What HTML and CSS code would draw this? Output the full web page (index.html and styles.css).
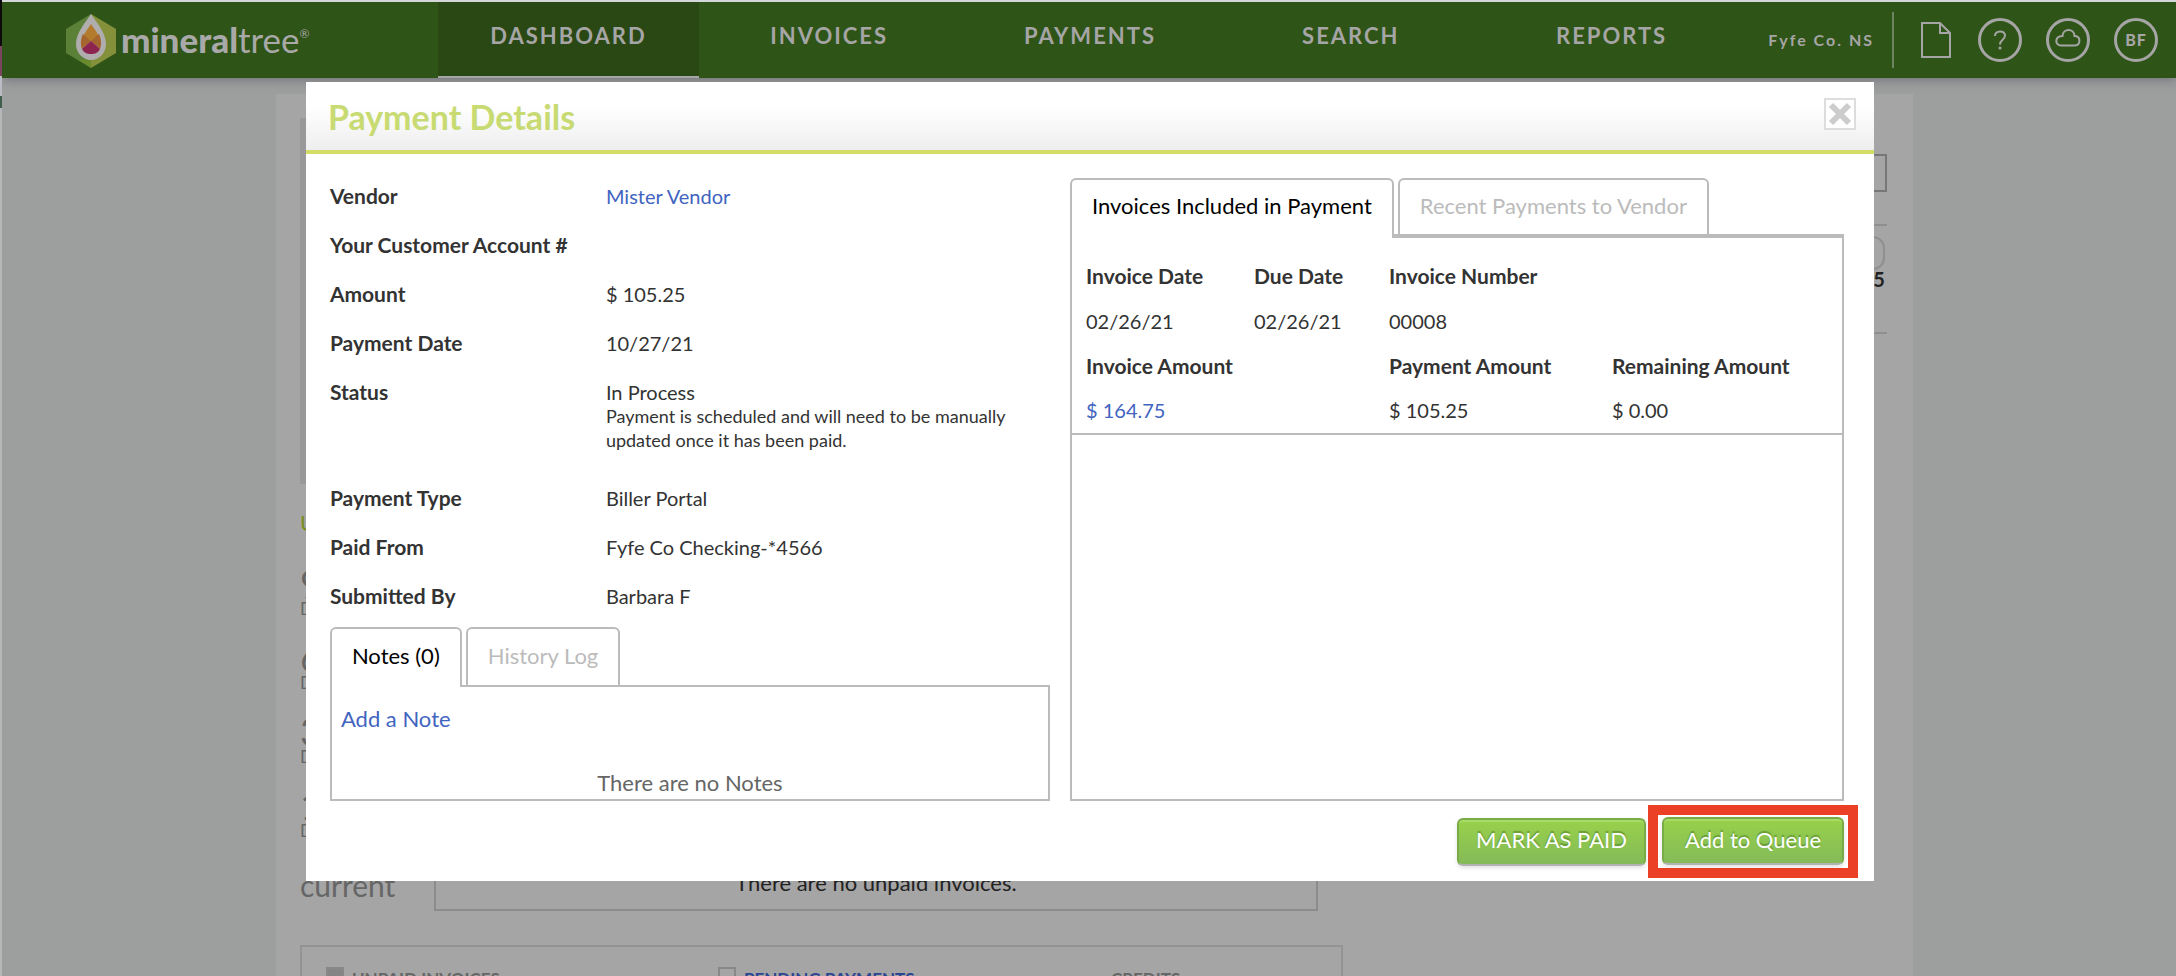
FILE: index.html
```
<!DOCTYPE html>
<html lang="en">
<head>
<meta charset="utf-8">
<title>Payment Details</title>
<link rel="stylesheet" href="styles.css">
</head>
<body>
<div class="edge"></div>
<div class="app">
  <header class="topbar">
    <a class="logo" href="#">
      <svg class="logo-mark" viewBox="0 0 50 54" aria-hidden="true">
        <path fill="#5b8139" d="M25 0 0 15v24l25 15z"/>
        <path fill="#84913a" d="M25 0l25 15v24L25 54z"/>
        <path fill="#6a8a2c" d="M25 45v9l-12-8z"/>
        <path fill="#b0adae" d="M25 0c6 9 15 19 15 30a15 16 0 0 1-30 0C10 19 19 9 25 0z"/>
        <path fill="#b37b2d" d="M25 10c4 6 10 13 10 20l-10-3-10 3c0-7 6-14 10-20z"/>
        <path fill="#a5652f" d="M17 20l8 7-9 8c-2-5-1-11 1-15zM33 20l-8 7 9 8c2-5 1-11-1-15z"/>
        <path fill="#8d2450" d="M25 27l9 8c-2 4-5 5-9 5s-7-1-9-5z"/>
      </svg>
      <span class="logo-text"><b>mineral</b>tree<sup>®</sup></span>
    </a>
    <nav class="nav">
      <a class="active" href="#">DASHBOARD</a>
      <a href="#">INVOICES</a>
      <a href="#">PAYMENTS</a>
      <a href="#">SEARCH</a>
      <a href="#">REPORTS</a>
    </nav>
    <div class="tools">
      <span class="company">Fyfe Co. NS</span>
      <button class="tool file" aria-label="Documents">
        <svg class="doc" viewBox="0 0 30 36"><path d="M1 1h18l10 10v24H1zM19 1v10h10"/></svg>
      </button>
      <button class="tool round" aria-label="Help">
        <svg class="glyph" viewBox="0 0 26 26"><path d="M8 9c0-6 10-6 10-.5 0 4.500-5 4-5 9"/><circle class="dot" cx="13" cy="21" r="1.500"/></svg>
      </button>
      <button class="tool round" aria-label="Cloud">
        <svg class="glyph" viewBox="0 0 26 26"><path d="M6 18.500h14a4.800 4.800 0 0 0 .5-9.500h-1c-.3-8-11.500-8-12 0-8 .3-8 9-1.500 9.500z"/></svg>
      </button>
      <button class="tool round">BF</button>
    </div>
  </header>

  <main class="card">
    <section class="summary">
      <div class="chart"></div>
      <div class="side">
        <div class="side-box"></div>
        <div class="side-item">
          <div class="pill"></div>
          <b>5</b>
        </div>
      </div>
    </section>
    <section class="aging">
      <div class="ages">
        <h2>U</h2>
        <div class="age"><b>9</b><span>D</span></div>
        <div class="age"><b>6</b><span>D</span></div>
        <div class="age"><b>3</b><span>D</span></div>
        <div class="age"><b>1</b><span>D</span></div>
        <div class="current">current</div>
      </div>
      <div class="unpaid">There are no unpaid invoices.</div>
    </section>
    <section class="legend">
      <span><i class="swatch filled"></i>UNPAID INVOICES</span>
      <a href="#"><i class="swatch"></i>PENDING PAYMENTS</a>
      <span>CREDITS</span>
    </section>
  </main>
</div>

<div class="overlay">
  <div class="modal" role="dialog" aria-labelledby="title">
    <header class="modal-head">
      <h1 id="title">Payment Details</h1>
      <button class="close" aria-label="Close">
        <svg viewBox="0 0 28 28"><path d="M5 5l18 18M23 5L5 23"/></svg>
      </button>
    </header>
    <div class="modal-body">
      <section class="column">
        <dl class="details">
          <div><dt>Vendor</dt><dd><a href="#">Mister Vendor</a></dd></div>
          <div><dt>Your Customer Account #</dt><dd></dd></div>
          <div><dt>Amount</dt><dd>$ 105.25</dd></div>
          <div><dt>Payment Date</dt><dd>10/27/21</dd></div>
          <div class="status"><dt>Status</dt><dd>In Process<p>Payment is scheduled and will need to be manually updated once it has been paid.</p></dd></div>
          <div><dt>Payment Type</dt><dd>Biller Portal</dd></div>
          <div><dt>Paid From</dt><dd>Fyfe Co Checking-*4566</dd></div>
          <div><dt>Submitted By</dt><dd>Barbara F</dd></div>
        </dl>
        <div class="tabs" role="tablist">
          <button class="tab on" role="tab" aria-selected="true">Notes (0)</button>
          <button class="tab" role="tab">History Log</button>
        </div>
        <div class="panel notes">
          <a href="#">Add a Note</a>
          <p>There are no Notes</p>
        </div>
      </section>
      <section class="column">
        <div class="tabs thick" role="tablist">
          <button class="tab on" role="tab" aria-selected="true">Invoices Included in Payment</button>
          <button class="tab" role="tab">Recent Payments to Vendor</button>
        </div>
        <div class="panel thick">
          <table class="invoices">
            <colgroup><col class="c1"><col class="c2"><col class="c3"><col></colgroup>
            <tbody>
            <tr><th>Invoice Date</th><th>Due Date</th><th>Invoice Number</th><td></td></tr>
            <tr><td>02/26/21</td><td>02/26/21</td><td>00008</td><td></td></tr>
            <tr><th colspan="2">Invoice Amount</th><th>Payment Amount</th><th>Remaining Amount</th></tr>
            <tr><td colspan="2"><a href="#">$ 164.75</a></td><td>$ 105.25</td><td>$ 0.00</td></tr>
            </tbody>
          </table>
        </div>
      </section>
    </div>
    <footer class="modal-foot">
      <button class="btn">MARK AS PAID</button>
      <div class="highlight"><button class="btn wide">Add to Queue</button></div>
    </footer>
  </div>
</div>
</body>
</html>
```
FILE: styles.css
```
* { box-sizing: border-box; }
body {
  margin: 0;
  height: 100vh;
  overflow: hidden;
  display: flex;
  background: #9d9f9e;
  font-family: Lato, "Open Sans", sans-serif;
  font-size: 20px;
  line-height: 24px;
  color: #333;
}
a { color: #4164c0; text-decoration: none; }
button { font: inherit; color: inherit; background: none; border: 0; padding: 0; }
h1, h2, p, dl, dd { margin: 0; }

.edge {
  width: 2px;
  flex: none;
  background: linear-gradient(#0b0b0b 46px, #7b4560 46px 76px, #b9bcc2 76px 96px, #3f5f4c 96px 108px, #b5b8b8 108px);
}
.app { flex: 1; min-width: 0; height: 100vh; overflow: hidden; border-top: 2px solid #d3d7d9; }

/* Top bar */
.topbar {
  position: relative;
  display: flex;
  height: 76px;
  background: #2f5417;
  color: #a5a5a5;
  box-shadow: 0 2px 10px rgba(70, 70, 85, .5);
}
.logo { width: 436px; flex: none; padding: 12px 0 0 64px; display: flex; gap: 5px; color: #a9a9a9; }
.logo-mark { width: 50px; height: 54px; flex: none; }
.logo-text { font-size: 35px; line-height: 50px; font-weight: 400; display: flex; }
.logo-text b { font-weight: 900; }
.logo-text sup { font-size: 12px; line-height: 40px; }
.nav { flex: 1; display: flex; }
.nav a {
  flex: 1;
  text-align: center;
  color: #a5a5a5;
  font-size: 22px;
  font-weight: 700;
  letter-spacing: 2px;
  line-height: 68px;
}
.nav .active { background: #294813; border-bottom: 2px solid #a5a5a5; }
.tools { flex: none; width: 434px; display: flex; align-items: center; justify-content: flex-end; padding-right: 18px; gap: 24px; }
.company {
  font-size: 16px;
  font-weight: 700;
  letter-spacing: 2px;
  line-height: 56px;
  padding-right: 18px;
  border-right: 2px solid #6d8560;
}
.tool { color: #a5a5a5; height: 44px; }
.tool svg { display: block; fill: none; stroke: #a5a5a5; stroke-width: 2; }
.tool .dot { fill: #a5a5a5; stroke: none; }
.file { width: 36px; padding: 0 3px; }
.doc { width: 30px; height: 36px; }
.round {
  width: 44px;
  border: 3px solid #a5a5a5;
  border-radius: 50%;
  display: flex;
  align-items: center;
  justify-content: center;
  font-size: 16px;
  font-weight: 900;
  letter-spacing: 1px;
}
.glyph { width: 26px; height: 26px; }

/* Dashboard behind the dialog */
.card { margin: 16px 12.1% 0 12.6%; background: #a5a5a5; padding: 24px 26px 0 24px; height: 100vh; }
.summary { display: grid; grid-template-columns: 1fr 400px; gap: 20px; height: 366px; }
.chart { background: #999; }
.side { padding-top: 36px; }
.side-box { height: 38px; border: 2px solid #777; }
.side-item { margin-top: 32px; height: 110px; border: solid #8f8f8f; border-width: 2px 0; padding: 10px 2px 0; text-align: right; color: #222; line-height: 18px; }
.pill { height: 34px; border: 2px solid #8f8f8f; border-radius: 12px; }
.aging { display: flex; padding-top: 19px; height: 427px; color: #666; }
.ages { width: 134px; flex: none; }
.ages h2 { font-size: 22px; line-height: 40px; font-weight: 400; color: #7a8c20; margin-bottom: 22px; }
.age { display: flex; flex-direction: column; height: 74px; }
.age b { font-size: 38px; line-height: 36px; font-weight: 400; }
.age span { font-size: 17px; line-height: 16px; }
.current { font-size: 30px; line-height: 48px; }
.unpaid {
  width: 55.7%;
  border: 2px solid #8c8c8c;
  color: #222;
  display: flex;
  align-items: flex-end;
  justify-content: center;
  padding-bottom: 14px;
  font-size: 22px;
}
.legend {
  width: 65.7%;
  margin-top: 34px;
  height: 100px;
  border: 2px solid #939393;
  padding: 20px 24px;
  display: grid;
  grid-template-columns: 392px 393px 1fr;
  font-size: 17px;
  font-weight: 700;
  color: #666;
}
.legend span, .legend a { display: flex; gap: 8px; }
.legend a { color: #2c4590; }
.swatch { width: 18px; height: 18px; border: 2px solid #888; }
.filled { background: #858585; }

/* Dialog */
.overlay { position: absolute; inset: 0 0 0 4px; padding-top: 82px; display: flex; justify-content: center; align-items: flex-start; }
.modal { width: 72.2%; background: #fff; }
.modal-head {
  display: flex;
  justify-content: space-between;
  align-items: flex-start;
  height: 72px;
  padding: 16px 18px 0 22px;
  border-bottom: 4px solid #d3dd67;
  background: linear-gradient(#fff 35%, #eee);
}
.modal-head h1 { font-size: 34px; line-height: 38px; color: #c8da72; }
.close { width: 32px; height: 32px; background: #fff; border: 2px solid #ddd; }
.close svg { display: block; fill: none; stroke: #ccc; stroke-width: 6; }
.modal-body { display: grid; grid-template-columns: 720fr 774fr; gap: 20px; padding: 24px 30px 0 24px; }
.column { display: flex; flex-direction: column; min-width: 0; }

.details { display: flex; flex-direction: column; gap: 25px; padding: 6px 0 19px; }
.details div { display: grid; grid-template-columns: 276px 1fr; }
.details dt { font-size: 21px; font-weight: 700; }
.details .status { padding-bottom: 9px; }
.details p { font-size: 18px; max-width: 410px; }

.tabs { display: flex; gap: 4px; height: 60px; margin-bottom: -2px; }
.tab {
  height: 58px;
  padding: 0 20px 2px;
  border: 2px solid #bbb;
  border-bottom: 0;
  border-radius: 6px 6px 0 0;
  background: #fff;
  color: #bbb;
  font-size: 22px;
}
.tab.on { height: 60px; padding-bottom: 4px; color: #000; position: relative; }
.tabs.thick { margin-bottom: -4px; }
.thick .tab { height: 56px; }
.thick .tab.on { height: 60px; padding-bottom: 6px; }
.panel { border: 2px solid #bbb; }
.panel.thick { border-top-width: 4px; flex: 1; }
.notes { height: 116px; padding: 20px 9px 0; display: flex; flex-direction: column; gap: 40px; font-size: 22px; }
.notes p { text-align: center; color: #666; }

.invoices { width: 100%; table-layout: fixed; border-collapse: collapse; border-bottom: 2px solid #bbb; margin-top: 16px; }
.invoices th, .invoices td { height: 45px; padding: 0 0 2px 14px; text-align: left; }
.invoices th { font-size: 21px; }
.c1 { width: 168px; }
.c2 { width: 135px; }
.c3 { width: 223px; }

.modal-foot { display: flex; justify-content: flex-end; align-items: center; gap: 2px; padding: 4px 16px 3px; }
.highlight { border: 10px solid #eb4026; padding: 2px 4px 3px; }
.btn {
  display: block;
  height: 48px;
  padding: 0 17px 3px;
  border: 2px solid #79ac49;
  border-bottom-color: #b2b2b2;
  border-radius: 6px;
  background: linear-gradient(#98d14a, #84bb59);
  color: #fff;
  font-size: 22px;
  text-shadow: 0 -2px 1px rgba(60, 110, 30, .5);
  box-shadow: inset 0 2px 0 #a8da66, 0 2px 4px rgba(0, 0, 0, .12);
}
.btn.wide { padding: 0 21px 3px; }
```
